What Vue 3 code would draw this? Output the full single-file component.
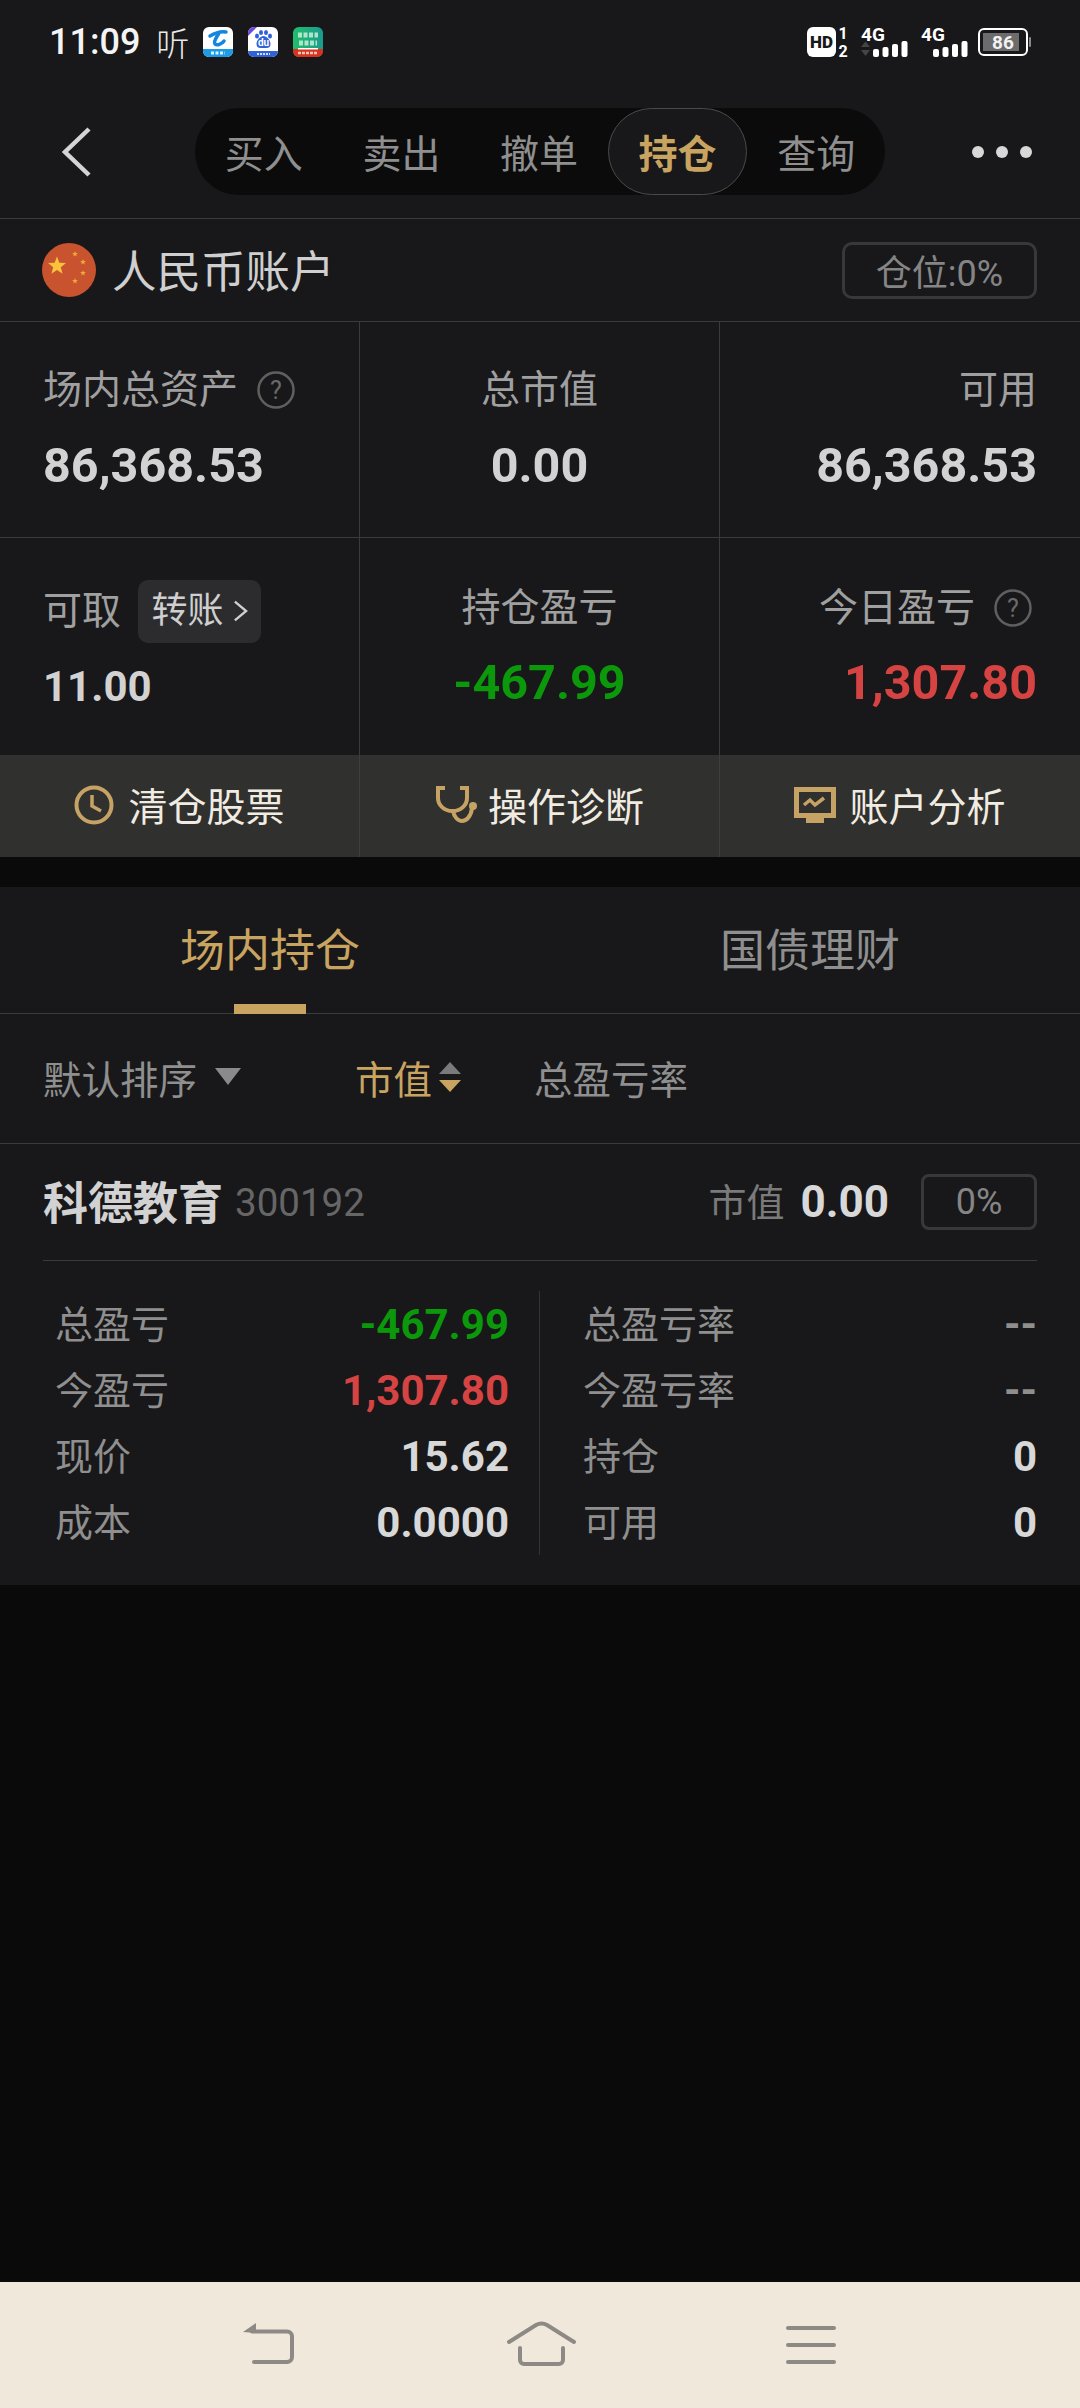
<script setup>
const tabs = [
  { name: "买入" },
  { name: "卖出" },
  { name: "撤单" },
  { name: "持仓", active: true },
  { name: "查询" },
];

const leftRows = [
  { label: "总盈亏", value: "-467.99", tone: "green" },
  { label: "今盈亏", value: "1,307.80", tone: "red" },
  { label: "现价", value: "15.62" },
  { label: "成本", value: "0.0000" },
];

const rightRows = [
  { label: "总盈亏率", value: "--", tone: "dim" },
  { label: "今盈亏率", value: "--", tone: "dim" },
  { label: "持仓", value: "0" },
  { label: "可用", value: "0" },
];

function star(cx, cy, r, rot = -90) {
  const pts = [];
  for (let i = 0; i < 10; i++) {
    const rad = i % 2 ? r * 0.42 : r;
    const a = ((rot + i * 36) * Math.PI) / 180;
    pts.push(`${(cx + rad * Math.cos(a)).toFixed(2)},${(cy + rad * Math.sin(a)).toFixed(2)}`);
  }
  return pts.join(" ");
}

const bars = [
  { x: 0, h: 8 },
  { x: 9.5, h: 10 },
  { x: 19, h: 13 },
  { x: 28.5, h: 16 },
];
</script>

<template>
  <div class="page">
    <header class="top">
      <div class="status">
        <span class="time">11:09</span>
        <span class="listen">听</span>
        <div class="apps">
          <svg class="app" viewBox="0 0 30 30">
            <rect width="30" height="30" rx="6" fill="#fff" />
            <path d="M0 22h30v2a6 6 0 0 1-6 6H6a6 6 0 0 1-6-6z" fill="#1c9be6" />
            <path d="M7 9C12 6 18 4 23 5M16 6C14 10 10 14 12 17 14 19 19 17 21 14" fill="none" stroke="#1386e0" stroke-width="3.500" stroke-linecap="round" />
            <path d="M8 26h14" stroke="#d8f0ff" stroke-width="3" stroke-dasharray="3 1.500" />
          </svg>
          <svg class="app" viewBox="0 0 30 30">
            <rect width="30" height="30" rx="6" fill="#fff" />
            <path d="M0 24h30a6 6 0 0 1-6 6H6a6 6 0 0 1-6-6z" fill="#2f62d8" />
            <path d="M0 9V6a6 6 0 0 1 6-6h3z" fill="#6a4bd6" />
            <ellipse cx="9" cy="9" rx="2" ry="2.600" fill="#2f62d8" />
            <ellipse cx="13" cy="5.500" rx="2" ry="2.600" fill="#2f62d8" />
            <ellipse cx="18" cy="5.500" rx="2" ry="2.600" fill="#2f62d8" />
            <ellipse cx="22" cy="9" rx="2" ry="2.600" fill="#2f62d8" />
            <path d="M15.500 9c3 0 7 4 7 8 0 3-2 4-4 4h-6c-2 0-4-1-4-4 0-4 4-8 7-8z" fill="#2f62d8" />
            <text x="15.500" y="19" class="app-du">du</text>
            <path d="M9 27h13" stroke="#cfe0ff" stroke-width="2" stroke-dasharray="2 1" />
          </svg>
          <svg class="app" viewBox="0 0 30 30">
            <defs>
              <linearGradient id="appGreen" x1="0" y1="0" x2="1" y2="0">
                <stop offset="0" stop-color="#1fbf6c" />
                <stop offset="1" stop-color="#1c9a8e" />
              </linearGradient>
            </defs>
            <rect width="30" height="30" rx="6" fill="url(#appGreen)" />
            <path d="M0 22h30v2a6 6 0 0 1-6 6H6a6 6 0 0 1-6-6z" fill="#d7331f" />
            <path d="M5 8h20M6 16h18" stroke="#d3f3e0" stroke-width="5" stroke-dasharray="4 1.500" opacity=".8" />
            <rect x="5" y="21" width="20" height="1.500" fill="#fff" />
            <path d="M5 26h19" stroke="#f5c6b5" stroke-width="2.500" stroke-dasharray="3 1" />
          </svg>
        </div>
        <div class="sys">
          <svg class="hd" viewBox="0 -2 44 34">
            <rect width="29" height="30" rx="6" fill="#fff" />
            <text x="14.500" y="21" class="hd-text">HD</text>
            <text x="36" y="12" class="sim-text">1</text>
            <text x="36" y="29.500" class="sim-text">2</text>
          </svg>
          <svg class="net" viewBox="0 0 48 32">
            <text x="0" y="15" class="net-text">4G</text>
            <path d="M0 21h9l-4.500-5.500z" fill="#444" />
            <path d="M0 24h9l-4.500 6z" fill="#444" />
            <rect v-for="b in bars" :key="b.x" :x="b.x + 12" :y="31 - b.h" width="6" :height="b.h" rx="2" fill="#fff" />
          </svg>
          <svg class="net net--second" viewBox="0 0 48 32">
            <text x="0" y="15" class="net-text">4G</text>
            <rect v-for="b in bars" :key="b.x" :x="b.x + 12" :y="31 - b.h" width="6" :height="b.h" rx="2" fill="#fff" />
          </svg>
          <svg class="battery" viewBox="0 0 54 28">
            <rect x="1" y="1" width="48" height="26" rx="5" fill="none" stroke="#fff" stroke-width="2" />
            <rect x="5" y="5" width="36" height="18" fill="#6c6c6c" />
            <rect x="51" y="9" width="2" height="10" rx="1" fill="#8a8a8a" />
            <text x="25" y="21" class="batt-text">86</text>
          </svg>
        </div>
      </div>

      <nav class="nav">
        <svg class="back" viewBox="0 0 30 52">
          <path d="M27 3 3 26l24 23" fill="none" stroke="#d4d4d4" stroke-width="4.500" />
        </svg>
        <div class="seg">
          <div v-for="t in tabs" :key="t.name" :class="['seg-item', t.active ? 'seg-item--active' : '']">
            {{ t.name }}
          </div>
        </div>
        <div class="dots"><i /><i /><i /></div>
      </nav>
    </header>

    <section class="account">
      <svg class="flag" viewBox="0 0 54 54">
        <circle cx="27" cy="27" r="27" fill="#c9532f" />
        <polygon :points="star(15, 23, 9.5)" fill="#f9c23c" />
        <polygon :points="star(33, 11, 3)" fill="#f0a93a" />
        <polygon :points="star(41, 19, 3)" fill="#f0a93a" />
        <polygon :points="star(41, 30, 3)" fill="#f0a93a" />
        <polygon :points="star(33, 38, 3)" fill="#f0a93a" />
      </svg>
      <span class="account-name">人民币账户</span>
      <span class="ratio">仓位:0%</span>
    </section>

    <section class="summary">
      <div class="cell cell--left">
        <div class="cell-label">
          场内总资产
          <svg class="help" viewBox="0 0 38 38">
            <circle cx="19" cy="19" r="17.500" fill="none" stroke="#5f5f5f" stroke-width="2.500" />
            <text x="19" y="28" class="help-text">?</text>
          </svg>
        </div>
        <div class="cell-value">86,368.53</div>
      </div>
      <div class="cell cell--mid">
        <div class="cell-label">总市值</div>
        <div class="cell-value">0.00</div>
      </div>
      <div class="cell cell--right">
        <div class="cell-label">可用</div>
        <div class="cell-value">86,368.53</div>
      </div>
      <div class="cell cell--left cell--bottom">
        <div class="cell-label cell-label--fetch">
          可取
          <span class="transfer">
            转账
            <svg class="transfer-arrow" viewBox="0 0 16 24">
              <path d="M2 2l12 10L2 22" fill="none" stroke="#cfcfcf" stroke-width="2.500" />
            </svg>
          </span>
        </div>
        <div class="cell-value cell-value--small">11.00</div>
      </div>
      <div class="cell cell--mid cell--bottom">
        <div class="cell-label">持仓盈亏</div>
        <div class="cell-value green">-467.99</div>
      </div>
      <div class="cell cell--right cell--bottom">
        <div class="cell-label">
          今日盈亏
          <svg class="help help--right" viewBox="0 0 38 38">
            <circle cx="19" cy="19" r="17.500" fill="none" stroke="#5f5f5f" stroke-width="2.500" />
            <text x="19" y="28" class="help-text">?</text>
          </svg>
        </div>
        <div class="cell-value red">1,307.80</div>
      </div>
    </section>

    <section class="actions">
      <div class="action">
        <svg class="action-icon" viewBox="0 0 40 40">
          <circle cx="20" cy="20" r="17.500" fill="none" stroke="#c6a364" stroke-width="4" />
          <path d="M18 10v11l9 5" fill="none" stroke="#c6a364" stroke-width="3.500" />
        </svg>
        <span class="action-text">清仓股票</span>
      </div>
      <div class="action">
        <svg class="action-icon action-icon--scope" viewBox="0 0 42 40">
          <path d="M10 3H3v10c0 7 6 13 14.500 13S32 20 32 13V3h-7" fill="none" stroke="#c6a364" stroke-width="4" />
          <path d="M18 26c1 6 5 10 9 10s9-4 10-13" fill="none" stroke="#c6a364" stroke-width="4" />
          <circle cx="38" cy="21" r="4" fill="#c6a364" />
        </svg>
        <span class="action-text">操作诊断</span>
      </div>
      <div class="action">
        <svg class="action-icon action-icon--screen" viewBox="0 0 42 36">
          <path d="M0 0h42v31H30v5H12v-5H0zM5 5v21h32V5z" fill="#c6a364" fill-rule="evenodd" />
          <path d="M10 18l6-5 5 5 9-7" fill="none" stroke="#c6a364" stroke-width="3.500" />
        </svg>
        <span class="action-text">账户分析</span>
      </div>
    </section>

    <main class="body">
      <div class="holdings">
        <div class="hold-tabs">
          <div class="hold-tab hold-tab--active">场内持仓</div>
          <div class="hold-tab">国债理财</div>
        </div>

        <div class="filters">
          <span class="filter filter--default">
            默认排序
            <i class="caret" />
          </span>
          <span class="filter filter--value">
            市值
            <span class="sort"><i class="sort-up" /><i class="sort-down" /></span>
          </span>
          <span class="filter">总盈亏率</span>
        </div>

        <div class="stock">
          <div class="stock-head">
            <span class="stock-name">科德教育</span>
            <span class="stock-code">300192</span>
            <span class="stock-mv-label">市值</span>
            <span class="stock-mv">0.00</span>
            <span class="stock-pct">0%</span>
          </div>
          <div class="stock-table">
            <div class="half half--left">
              <div v-for="r in leftRows" :key="r.label" class="row">
                <span class="row-label">{{ r.label }}</span>
                <span :class="['row-value', r.tone]">{{ r.value }}</span>
              </div>
            </div>
            <div class="half half--right">
              <div v-for="r in rightRows" :key="r.label" class="row">
                <span class="row-label">{{ r.label }}</span>
                <span :class="['row-value', r.tone]">{{ r.value }}</span>
              </div>
            </div>
          </div>
        </div>
      </div>
    </main>

    <footer class="sysnav">
      <svg class="sysnav-icon" viewBox="0 0 60 48">
        <path d="M5 11 18 2v10z" fill="#8d8a85" />
        <path d="M14 10.500h35a5 5 0 0 1 5 5V36a5 5 0 0 1-5 5H16" fill="none" stroke="#8d8a85" stroke-width="4" stroke-linecap="round" />
      </svg>
      <svg class="sysnav-icon sysnav-icon--home" viewBox="0 0 76 48">
        <path d="M7 21 34 4q5.500-3 11 0l27 17" fill="none" stroke="#8d8a85" stroke-width="4" stroke-linecap="round" />
        <path d="M18 27v12a4 4 0 0 0 4 4h35a4 4 0 0 0 4-4V27" fill="none" stroke="#8d8a85" stroke-width="4" stroke-linecap="round" />
      </svg>
      <svg class="sysnav-icon" viewBox="0 0 60 48">
        <path d="M6 7h46M6 24h46M6 41h46" fill="none" stroke="#8d8a85" stroke-width="4" stroke-linecap="round" />
      </svg>
    </footer>
  </div>
</template>

<style scoped>
  .page {
    display: flex;
    flex-direction: column;
    width: 1080px;
    height: 2408px;
    background: #0a0a0a;
    font-family: Roboto, "Noto Sans CJK SC", sans-serif;
    color: #a0a0a0;
    overflow: hidden;
  }

  .top {
    height: 219px;
    background: #18181a;
    border-bottom: 1px solid #3a3a3c;
    box-sizing: border-box;
  }

  .status {
    display: flex;
    align-items: center;
    height: 84px;
    padding: 0 48px 0 49px;
  }

  .time {
    font-size: 36px;
    font-weight: 500;
    color: #f4f4f4;
  }

  .listen {
    margin-left: 16px;
    font-size: 33px;
    font-weight: 300;
    color: #e8e8e8;
  }

  .apps {
    display: flex;
    gap: 15px;
    margin-left: 14px;
  }

  .app {
    width: 30px;
    height: 30px;
  }

  .app-du {
    font: 700 10px Roboto, sans-serif;
    fill: #fff;
    text-anchor: middle;
  }

  .sys {
    display: flex;
    align-items: center;
    margin-left: auto;
  }

  .hd {
    width: 44px;
    height: 34px;
    overflow: visible;
  }

  .hd-text {
    font: 900 17px Roboto, sans-serif;
    fill: #18181a;
    text-anchor: middle;
  }

  .sim-text {
    font: 700 16px Roboto, sans-serif;
    fill: #fff;
    text-anchor: middle;
  }

  .net {
    width: 48px;
    height: 32px;
    margin-left: 10px;
    overflow: visible;
  }

  .net--second {
    margin-left: 12px;
  }

  .net-text {
    font: 700 19px Roboto, sans-serif;
    fill: #fff;
  }

  .battery {
    width: 54px;
    height: 28px;
    margin-left: 9px;
  }

  .batt-text {
    font: 700 19px Roboto, sans-serif;
    fill: #f2f2f2;
    text-anchor: middle;
  }

  .nav {
    display: flex;
    align-items: center;
    height: 134px;
    padding-top: 1px;
    box-sizing: border-box;
  }

  .back {
    width: 30px;
    height: 52px;
    margin-left: 62px;
  }

  .seg {
    display: flex;
    width: 690px;
    height: 87px;
    margin-left: 103px;
    background: #0b0b0b;
    border-radius: 44px;
  }

  .seg-item {
    display: flex;
    flex: 1;
    align-items: center;
    justify-content: center;
    padding-bottom: 2px;
    box-sizing: border-box;
    font-size: 39px;
    color: #8f8f8f;
  }

  .seg-item--active {
    background: #18181a;
    border: 1px solid #4a4a4a;
    border-radius: 44px;
    color: #c9a461;
    font-weight: 700;
  }

  .dots {
    display: flex;
    gap: 12px;
    margin-left: 87px;
  }

  .dots i {
    width: 12px;
    height: 12px;
    background: #d8d8d8;
    border-radius: 50%;
  }

  .account {
    display: flex;
    align-items: center;
    box-sizing: border-box;
    height: 103px;
    padding: 0 43px 0 42px;
    background: #18181a;
    border-bottom: 1px solid #3a3a3c;
  }

  .flag {
    width: 54px;
    height: 54px;
  }

  .account-name {
    margin: 0 0 4px 16px;
    font-size: 44.5px;
    color: #cfcfcf;
  }

  .ratio {
    display: flex;
    align-items: center;
    justify-content: center;
    box-sizing: border-box;
    width: 195px;
    height: 57px;
    margin-left: auto;
    border: 3px solid #38383a;
    border-radius: 10px;
    font-size: 36px;
    color: #858585;
  }

  .summary {
    display: grid;
    grid-template-columns: repeat(3, 360px);
    background: #18181a;
  }

  .cell {
    display: flex;
    flex-direction: column;
    box-sizing: border-box;
    height: 216px;
    padding: 44px 43px 0;
    border-right: 1px solid #3a3a3c;
    border-bottom: 1px solid #3a3a3c;
  }

  .cell--right {
    border-right: none;
    align-items: flex-end;
  }

  .cell--mid {
    align-items: center;
  }

  .cell--bottom {
    height: 217px;
    padding-top: 46px;
    border-bottom: none;
  }

  .cell-label {
    display: flex;
    align-items: center;
    height: 48px;
    font-size: 39px;
    line-height: 48px;
    color: #a0a0a0;
  }

  .cell-label--fetch {
    position: relative;
    top: 3px;
  }

  .cell-value {
    margin-top: 24px;
    font-size: 48.5px;
    line-height: 56px;
    font-weight: 700;
    color: #d2d2d2;
  }

  .cell--bottom .cell-value {
    margin-top: 23px;
  }

  .cell--bottom .cell-value--small {
    margin-top: 27px;
    font-size: 42px;
  }

  .help {
    width: 38px;
    height: 38px;
    margin-left: 19px;
  }

  .help--right {
    margin-right: 5px;
  }

  .help-text {
    font: 400 25px Roboto, sans-serif;
    fill: #6a6a6a;
    text-anchor: middle;
  }

  .transfer {
    display: flex;
    align-items: center;
    justify-content: center;
    gap: 9px;
    width: 123px;
    height: 63px;
    margin-left: 17px;
    background: #2c2c2e;
    border-radius: 10px;
    font-size: 36px;
    color: #cfcfcf;
  }

  .transfer-arrow {
    width: 15px;
    height: 24px;
  }

  .green {
    color: #0b980b;
  }

  .red {
    color: #d64343;
  }

  .actions {
    display: grid;
    grid-template-columns: repeat(3, 360px);
    height: 102px;
    background: #30302e;
  }

  .action {
    display: flex;
    align-items: center;
    justify-content: center;
    gap: 14px;
    box-sizing: border-box;
    border-right: 1px solid #3e3e3c;
    font-size: 39px;
    color: #f1ece2;
  }

  .action:last-child {
    border-right: none;
  }

  .action-text {
    padding-bottom: 5px;
  }

  .action-icon {
    width: 40px;
    height: 40px;
    margin-bottom: 2px;
  }

  .action-icon--scope {
    width: 42px;
    margin-right: -3px;
  }

  .action-icon--screen {
    width: 42px;
    height: 36px;
    margin-right: -1px;
  }

  .body {
    flex: 1;
    padding-top: 30px;
  }

  .holdings {
    background: #18181a;
  }

  .hold-tabs {
    display: flex;
    box-sizing: border-box;
    height: 127px;
    border-bottom: 1px solid #3a3a3c;
  }

  .hold-tab {
    display: flex;
    position: relative;
    flex: 1;
    align-items: center;
    justify-content: center;
    padding-bottom: 6px;
    font-size: 45px;
    color: #8f8f8f;
  }

  .hold-tab--active {
    color: #c9a461;
  }

  .hold-tab--active::after {
    content: "";
    position: absolute;
    left: 234px;
    bottom: -1px;
    width: 72px;
    height: 10px;
    background: #c9a461;
  }

  .filters {
    display: flex;
    align-items: center;
    box-sizing: border-box;
    height: 130px;
    padding: 0 0 4px 43px;
    border-bottom: 1px solid #3a3a3c;
  }

  .filter {
    display: flex;
    align-items: center;
    font-size: 38.5px;
    color: #8f8f8f;
  }

  .filter--default {
    width: 312px;
  }

  .filter--value {
    width: 179px;
    color: #c9a461;
  }

  .caret {
    width: 0;
    height: 0;
    margin-left: 18px;
    border-left: 13px solid transparent;
    border-right: 13px solid transparent;
    border-top: 17px solid #8a8a8a;
  }

  .sort {
    display: flex;
    flex-direction: column;
    gap: 6px;
    margin-left: 7px;
  }

  .sort-up,
  .sort-down {
    width: 0;
    height: 0;
    border-left: 11px solid transparent;
    border-right: 11px solid transparent;
  }

  .sort-up {
    border-bottom: 12px solid #7a7a7a;
  }

  .sort-down {
    border-top: 12px solid #c9a461;
  }

  .stock {
    padding: 0 43px;
  }

  .stock-head {
    display: flex;
    align-items: center;
    box-sizing: border-box;
    height: 117px;
    border-bottom: 1px solid #3a3a3c;
  }

  .stock-name {
    margin-bottom: 4px;
    font-size: 45px;
    font-weight: 700;
    color: #d2d2d2;
  }

  .stock-code {
    margin-left: 12px;
    font-size: 38.5px;
    color: #666;
  }

  .stock-mv-label {
    margin: 0 0 5px auto;
    font-size: 38px;
    color: #7a7a7a;
  }

  .stock-mv {
    margin-left: 16px;
    font-size: 44px;
    font-weight: 700;
    color: #d8d8d8;
  }

  .stock-pct {
    display: flex;
    align-items: center;
    justify-content: center;
    box-sizing: border-box;
    width: 116px;
    height: 56px;
    margin-left: 32px;
    border: 3px solid #38383a;
    border-radius: 8px;
    font-size: 36px;
    color: #858585;
  }

  .stock-table {
    display: flex;
    padding: 30px 0;
  }

  .half {
    box-sizing: border-box;
  }

  .half--left {
    width: 497px;
    padding: 0 30px 0 12px;
    border-right: 1px solid #333335;
  }

  .half--right {
    flex: 1;
    padding-left: 43px;
  }

  .row {
    display: flex;
    align-items: center;
    justify-content: space-between;
    height: 66px;
  }

  .row-label {
    margin-bottom: 6px;
    font-size: 38px;
    color: #8f8f8f;
  }

  .row-value {
    font-size: 42px;
    font-weight: 700;
    color: #d8d8d8;
  }

  .row-value.green {
    color: #0b980b;
  }

  .row-value.red {
    color: #d64343;
  }

  .row-value.dim {
    color: #8f8f8f;
  }

  .sysnav {
    display: flex;
    align-items: center;
    justify-content: center;
    gap: 204px;
    height: 126px;
    background: #f1e8dc;
  }

  .sysnav-icon {
    width: 60px;
    height: 48px;
  }

  .sysnav-icon--home {
    width: 76px;
  }
</style>

<style>
  html,
  body {
    background: #0a0a0a;
  }
</style>
